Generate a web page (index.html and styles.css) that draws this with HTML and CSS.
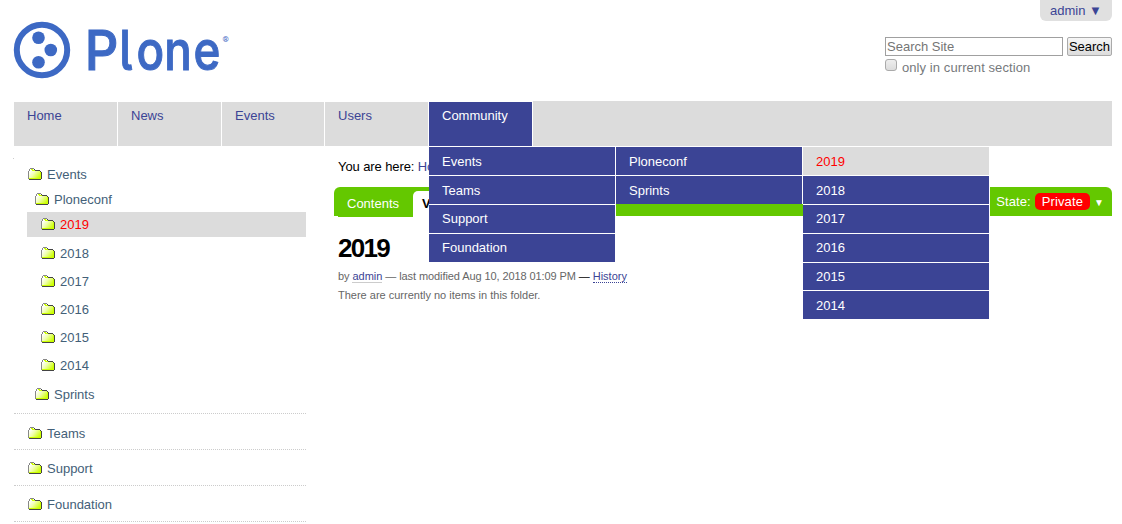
FILE: index.html
```html
<!DOCTYPE html>
<html lang="en">
<head>
<meta charset="utf-8">
<title>2019 — Plone</title>
<link rel="stylesheet" href="styles.css">
</head>
<body>
<svg class="defs" width="0" height="0" aria-hidden="true">
  <defs>
    <linearGradient id="folder-fill" x1="0" y1="0" x2="1" y2="0.7">
      <stop offset="0.15" stop-color="#fff"/>
      <stop offset="0.5" stop-color="#f0ffae"/>
      <stop offset="1" stop-color="#ccff00"/>
    </linearGradient>
    <symbol id="folder" viewBox="0 0 14 12">
      <path d="M1 2h1V1h4v1h1v1h5v1h1v7H1z" fill="url(#folder-fill)"/>
      <path d="M3 1h2v1h2v1H4V2H3z" fill="#ccff00"/>
      <path d="M12 4h1v7h-1zM1 10h12v1H1z" fill="#ccff00"/>
      <path d="M2 0h4v1H2zM1 1h1v2H1zM0 3h1v8H0z" fill="#888"/>
      <path d="M6 1h1v1H6zM7 2h5v1H7zM12 3h1v1h-1zM13 4h1v7h-1zM1 11h12v1H1z" fill="#444"/>
    </symbol>
  </defs>
</svg>
<div class="page">
  <header class="header">
    <svg class="logo" width="220" height="60" viewBox="0 0 220 60" role="img">
      <circle cx="28" cy="30" r="25.2" fill="none" stroke="#3d69c4" stroke-width="6"/>
      <g fill="#3d69c4">
        <circle cx="24.5" cy="17.8" r="6.3"/>
        <circle cx="36.8" cy="30" r="6.3"/>
        <circle cx="24.5" cy="42.2" r="6.3"/>
        <text class="logo-word" transform="scale(.84 1)" y="49.6"><tspan x="84.3" textLength="40" lengthAdjust="spacingAndGlyphs">P</tspan><tspan x="125.2 145.8 179 213.6">lone</tspan></text>
        <text class="logo-mark" x="208.5" y="21.5">®</text>
      </g>
    </svg>
    <div class="tools">
      <a class="user">admin ▼</a>
      <form class="search">
        <div class="search-row">
          <input class="search-field" type="text" placeholder="Search Site">
          <button class="search-button" type="button">Search</button>
        </div>
        <label class="section"><span class="box"></span>only in current section</label>
      </form>
    </div>
  </header>

  <nav class="nav">
    <a class="tab">Home</a><a class="tab">News</a><a class="tab short">Events</a><a class="tab">Users</a>
    <div class="tab active">Community
      <div class="menus">
        <div class="menu"><a>Events</a><a>Teams</a><a>Support</a><a>Foundation</a></div>
        <div class="menu"><a>Ploneconf</a><a>Sprints</a></div>
        <div class="menu"><a class="current">2019</a><a>2018</a><a>2017</a><a>2016</a><a class="low">2015</a><a>2014</a></div>
      </div>
    </div>
  </nav>

  <div class="columns">
    <aside class="side">
      <div class="group">
        <a class="item"><svg class="icon"><use href="#folder"/></svg>Events</a>
        <a class="item l2"><svg class="icon"><use href="#folder"/></svg>Ploneconf</a>
        <a class="item l3 current"><svg class="icon"><use href="#folder"/></svg>2019</a>
        <a class="item l3 year"><svg class="icon"><use href="#folder"/></svg>2018</a>
        <a class="item l3 year"><svg class="icon"><use href="#folder"/></svg>2017</a>
        <a class="item l3 year"><svg class="icon"><use href="#folder"/></svg>2016</a>
        <a class="item l3 year"><svg class="icon"><use href="#folder"/></svg>2015</a>
        <a class="item l3 year"><svg class="icon"><use href="#folder"/></svg>2014</a>
        <a class="item l2 last"><svg class="icon"><use href="#folder"/></svg>Sprints</a>
      </div>
      <div class="group"><a class="item top first"><svg class="icon"><use href="#folder"/></svg>Teams</a></div>
      <div class="group"><a class="item top"><svg class="icon"><use href="#folder"/></svg>Support</a></div>
      <div class="group"><a class="item top"><svg class="icon"><use href="#folder"/></svg>Foundation</a></div>
    </aside>
    <main class="main">
      <div class="crumbs">You are here: <a>Home</a></div>
      <div class="bar">
        <a class="view">Contents</a>
        <a class="view selected">View</a>
        <div class="state">State: <span class="private">Private</span><span class="arrow">▼</span></div>
      </div>
      <h1 class="title">2019</h1>
      <div class="byline">by <a class="author">admin</a> — last modified Aug 10, 2018 01:09 PM <b class="dash">—</b> <a class="history">History</a></div>
      <p class="empty">There are currently no items in this folder.</p>
    </main>
  </div>
</div>
</body>
</html>
```
FILE: styles.css
```css
* { box-sizing: border-box; }
html, body { margin: 0; height: 524px; overflow: hidden; background: #fff; }
body { font: 13px/16px "Liberation Sans", Arial, sans-serif; color: #000; }
.defs { position: absolute; }
.page { width: 1098px; margin-left: 14px; }

.header { display: flex; justify-content: space-between; height: 101px; }
.logo { margin-top: 20px; overflow: visible; }
.logo-word { font: 500 54.5px Inter, sans-serif; font-feature-settings: "cv05"; stroke: #3d69c4; stroke-width: 1px; }
.logo-mark { font: 700 8px Roboto, sans-serif; }
.tools { display: flex; flex-direction: column; align-items: flex-end; }
.user { width: 72px; height: 21px; padding: 3px 0 0 10px; background: #e0e0e0; color: #3b4495; border-radius: 0 0 6px 6px; white-space: nowrap; }
.search { margin: 16px 0 0; width: 227px; }
.search-row { display: flex; gap: 4px; }
.search-field { width: 178px; height: 19px; padding: 1px; border: 1px solid #a0a0a0; font: inherit; color: #000; }
.search-field::placeholder { color: #757575; }
.search-button { width: 45px; height: 19px; padding: 0; border: 1px solid #aaa; border-radius: 2px; background: linear-gradient(#f6f6f6, #dcdcdc); font: inherit; color: #000; }
.section { display: flex; margin-top: 3px; color: #76797c; line-height: 18px; letter-spacing: 0.08px; }
.box { width: 12px; height: 12px; margin-right: 5px; border: 1px solid #aaa; border-radius: 3px; background: linear-gradient(#eee, #dcdcdc); }

.nav { display: flex; height: 45px; background: #dcdcdc; }
.tab { width: 104px; border-top: 1px solid #fff; border-right: 1px solid #fff; padding: 6px 0 0 13px; background: #dcdcdc; color: #3b4495; }
.tab.short { width: 103px; }
.tab.active { position: relative; background: #3b4495; color: #fff; }
.menus { position: absolute; z-index: 2; left: 0; top: 45px; display: flex; align-items: flex-start; }
.menu { width: 187px; border-right: 1px solid #fff; }
.menu a { display: block; height: 28px; margin-bottom: 1px; padding: 7px 13px 0; background: #3b4495; color: #fff; box-shadow: 0 -1px #fff; }
.menu a.current { background: #dcdcdc; color: #f00; }
.menu a:nth-child(3), .menu a:nth-child(4) { padding-top: 6px; }
.menu a.low { height: 27px; padding-top: 6px; }
.menu a:last-child { margin-bottom: 0; }

.columns { display: flex; }
.side { width: 292px; padding-top: 12px; }
.side::before { content: ""; display: block; width: 1px; height: 1px; margin: 0 0 3px -1px; background: #ccc; }
.group { border-bottom: 1px dotted #ccc; }
.item { display: flex; height: 25px; margin-left: 13px; padding: 5px 0 0 1px; color: #436078; }
.icon { width: 14px; height: 12px; margin: 1px 5px 0 0; shape-rendering: crispEdges; }
.l2 { padding-left: 8px; }
.l3 { padding-left: 14px; }
.item.current { background: #dcdcdc; color: #f00; }
.year { height: 28px; padding-top: 9px; }
.last { height: 36px; padding-top: 10px; }
.top { height: 35px; padding-top: 11px; }
.top.first { padding-top: 12px; }

.main { width: 778px; margin-left: 28px; }
.crumbs { height: 41px; padding: 13px 0 0 4px; letter-spacing: -0.1px; }
.crumbs a { color: #3b4495; }
.bar { display: flex; height: 29px; background: #64c800; border-radius: 6px 6px 0 0; }
.view { width: 75px; height: 30px; margin-left: 4px; padding: 9px 0 0 9px; background: #64c800; color: #fff; }
.view:first-child { border-top-left-radius: 6px; }
.view.selected { width: 50px; height: 26px; margin: 4px 0 0; padding: 5px 9px 0; background: #fff; color: #000; font-weight: bold; border-radius: 5px 5px 0 0; }
.state { display: flex; margin-left: auto; padding: 6px 8px 0 0; color: #fff; line-height: 17px; letter-spacing: 0.1px; }
.private { height: 17px; margin-left: 4px; padding: 0 7px; border-radius: 5px; background: #f00; }
.arrow { margin-left: 4px; font-size: 10px; line-height: 19px; }
.title { margin: 17px 0 0 4px; font-size: 26px; line-height: 31px; letter-spacing: -1.7px; }
.byline { margin: 5px 0 0 4px; font-size: 11px; line-height: 14px; color: #666; letter-spacing: -0.09px; }
.byline a { color: #3b4495; letter-spacing: 0; }
.author { border-bottom: 1px solid #ccc; }
.history { border-bottom: 1px dotted #3b4495; }
.dash { font-weight: normal; color: #000; }
.empty { margin: 5px 0 0 4px; font-size: 11px; line-height: 14px; color: #666; }
```
